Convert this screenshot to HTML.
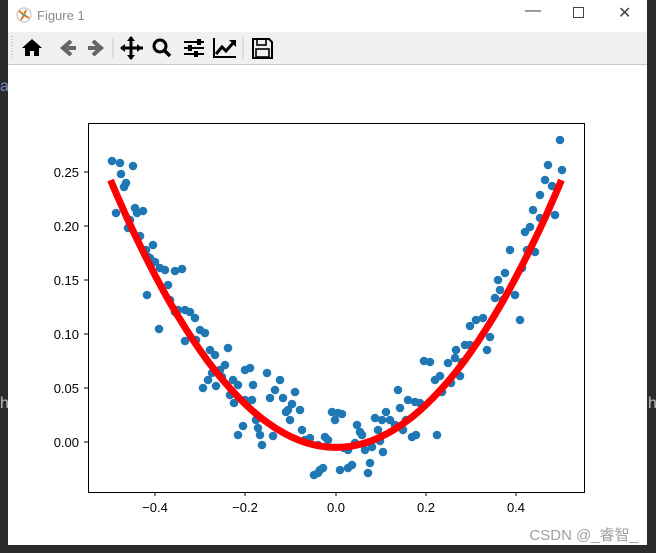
<!DOCTYPE html>
<html><head><meta charset="utf-8"><style>
body{margin:0;width:656px;height:553px;background:#2b2b2b;overflow:hidden;position:relative;font-family:"Liberation Sans","DejaVu Sans",sans-serif}
#win{position:absolute;left:8px;top:0;width:639px;height:545px;background:#fff}
#title{position:absolute;left:0;top:0;width:639px;height:31px;background:#fff;color:#8a8a8a;font-size:13px}
#tb{position:absolute;left:0;top:32px;width:639px;height:32px;background:#f0f0f0;border-bottom:1px solid #c8c8c8}
</style></head><body>
<div style="position:absolute;left:0;top:78px;color:#7a8ad0;font-size:16px">a</div>
<div style="position:absolute;left:0;top:395px;color:#bbb;font-size:16px">h</div>
<div style="position:absolute;left:648px;top:395px;color:#bbb;font-size:16px">h</div>
<div id="win">
<div id="title">
<svg style="position:absolute;left:8px;top:7px" width="16" height="16" viewBox="0 0 16 16"><circle cx="8" cy="8" r="7" fill="#fff" stroke="#bbb"/><path d="M8 8L3 4M8 8L5 13M8 8L13 11M8 8L10 3" stroke="#e67a20" stroke-width="2"/><circle cx="8" cy="8" r="1.5" fill="#4a8"/></svg>
<span style="position:absolute;left:29px;top:8px">Figure 1</span>
<span style="position:absolute;left:517px;top:2px;font-size:16px;color:#444">—</span>
<span style="position:absolute;left:565px;top:7px;width:9px;height:9px;border:1px solid #444"></span>
<span style="position:absolute;left:610px;top:3px;font-size:16px;color:#444">✕</span>
</div>
<div id="tb">
<svg width="280" height="32" viewBox="0 0 280 32">
<path d="M4 4v24" stroke="#aaa" stroke-dasharray="1 2"/>
<path d="M24 7L14 16h3v8h5v-5h4v5h5v-8h3z" fill="#000"/>
<path d="M63 9L55 16l8 7M56 16h12" stroke="#666" stroke-width="4" fill="none"/>
<path d="M85 9l8 7-8 7M92 16H80" stroke="#666" stroke-width="4" fill="none"/>
<path d="M105 5v22" stroke="#ccc"/>
<path d="M123 5v22M113 16h22" stroke="#000" stroke-width="3"/>
<path d="M123 4l-4 5h8zM123 28l-4-5h8zM112 16l5-4v8zM134 16l-5-4v8z" fill="#000"/>
<circle cx="152" cy="14" r="6" stroke="#000" stroke-width="3" fill="none"/><path d="M156 18l6 6" stroke="#000" stroke-width="3.5"/>
<path d="M176 10h20M176 16h20M176 22h20" stroke="#000" stroke-width="2"/><rect x="189" y="7" width="4" height="6" fill="#000"/><rect x="180" y="13" width="4" height="6" fill="#000"/><rect x="186" y="19" width="4" height="6" fill="#000"/>
<path d="M206 6v19h22" stroke="#000" stroke-width="2" fill="none"/><path d="M208 22l6-7 4 4 8-9" stroke="#000" stroke-width="3" fill="none"/><path d="M221 8h7v7z" fill="#000"/>
<path d="M235 5v22" stroke="#ccc"/>
<path d="M245 7h16l3 3v16h-19z" stroke="#000" stroke-width="2" fill="none"/><rect x="249" y="7" width="9" height="6" stroke="#000" stroke-width="1.6" fill="none"/><rect x="248" y="17" width="13" height="8" stroke="#000" stroke-width="1.6" fill="none"/>
</svg>
</div>
</div>
<svg id="plot" style="position:absolute;left:0;top:0" width="656" height="553">
<g font-family="Liberation Sans, DejaVu Sans, sans-serif" font-size="13" fill="#000" text-anchor="end">
<text x="79" y="177">0.25</text><text x="79" y="231">0.20</text><text x="79" y="285">0.15</text><text x="79" y="339">0.10</text><text x="79" y="393">0.05</text><text x="79" y="447">0.00</text>
</g>
<g stroke="#000"><path d="M84 172h4M84 226h4M84 280h4M84 334h4M84 388h4M84 442h4M155 492v4M245 492v4M336 492v4M426 492v4M516 492v4"/></g>
<g font-family="Liberation Sans, DejaVu Sans, sans-serif" font-size="13" fill="#000" text-anchor="middle">
<text x="155" y="512">−0.4</text><text x="245" y="512">−0.2</text><text x="336" y="512">0.0</text><text x="426" y="512">0.2</text><text x="516" y="512">0.4</text>
</g>
<g id="dots" fill="#1f77b4"></g>
<path id="curve" fill="none" stroke="#ff0000" stroke-width="7"/>
<rect x="88.5" y="123.5" width="496" height="369" fill="none" stroke="#000"/>
<text x="638" y="540" text-anchor="end" font-family="Liberation Sans, Noto Sans CJK SC, sans-serif" font-size="15" fill="#a0a0a0">CSDN @_睿智_</text>
</svg>
<script>
var pts=[[112,161],[120,163],[116,213],[121,174],[124,187],[126,183],[133,166],[128,228],[130,220],[135,208],[140,236],[137,213],[143,211],[150,258],[148,257],[153,245],[155,262],[159,329],[147,295],[160,268],[165,270],[170,300],[175,271],[182,269],[178,310],[185,310],[175,312],[190,312],[195,318],[185,341],[200,330],[205,333],[210,350],[203,388],[208,380],[215,355],[220,370],[225,365],[228,348],[212,373],[216,386],[222,377],[230,395],[233,380],[238,385],[234,403],[245,370],[250,368],[253,385],[245,400],[238,435],[243,426],[256,420],[258,428],[260,435],[262,445],[267,373],[270,398],[273,436],[275,390],[280,380],[283,398],[288,410],[292,404],[295,392],[290,420],[286,412],[300,410],[305,440],[310,438],[314,475],[318,473],[320,470],[323,468],[318,445],[325,437],[332,412],[335,420],[338,413],[342,414],[340,470],[344,448],[348,468],[352,465],[357,425],[355,443],[360,432],[362,435],[365,450],[368,473],[370,463],[372,447],[375,418],[378,430],[380,441],[383,452],[386,412],[390,420],[395,425],[398,390],[400,408],[403,430],[406,420],[412,437],[415,402],[420,403],[424,361],[430,362],[437,435],[435,380],[442,392],[448,363],[451,383],[455,358],[460,376],[465,345],[462,362],[470,326],[476,320],[483,318],[487,350],[490,337],[495,298],[498,280],[503,300],[505,273],[510,250],[515,295],[520,320],[522,268],[527,250],[530,227],[535,252],[533,210],[540,195],[545,180],[548,165],[552,186],[555,215],[560,140],[562,170],[540,218],[525,232],[470,345],[440,376],[416,435],[382,420],[146,250],[168,285],[196,340],[252,400],[302,430],[328,440],[348,450],[408,400],[456,350],[500,290]];
var g=document.getElementById('dots'),s='';
pts.forEach(function(p){s+='<circle cx="'+p[0]+'" cy="'+p[1]+'" r="4.3"/>';});
g.innerHTML=s;
var d='';for(var i=0;i<=60;i++){var x=-0.5+i/60,y=0.99*x*x-0.005;d+=(i?'L':'M')+(336+x*451).toFixed(1)+' '+(442-y*1080).toFixed(1);}
document.getElementById('curve').setAttribute('d',d);
</script>
</body></html>
